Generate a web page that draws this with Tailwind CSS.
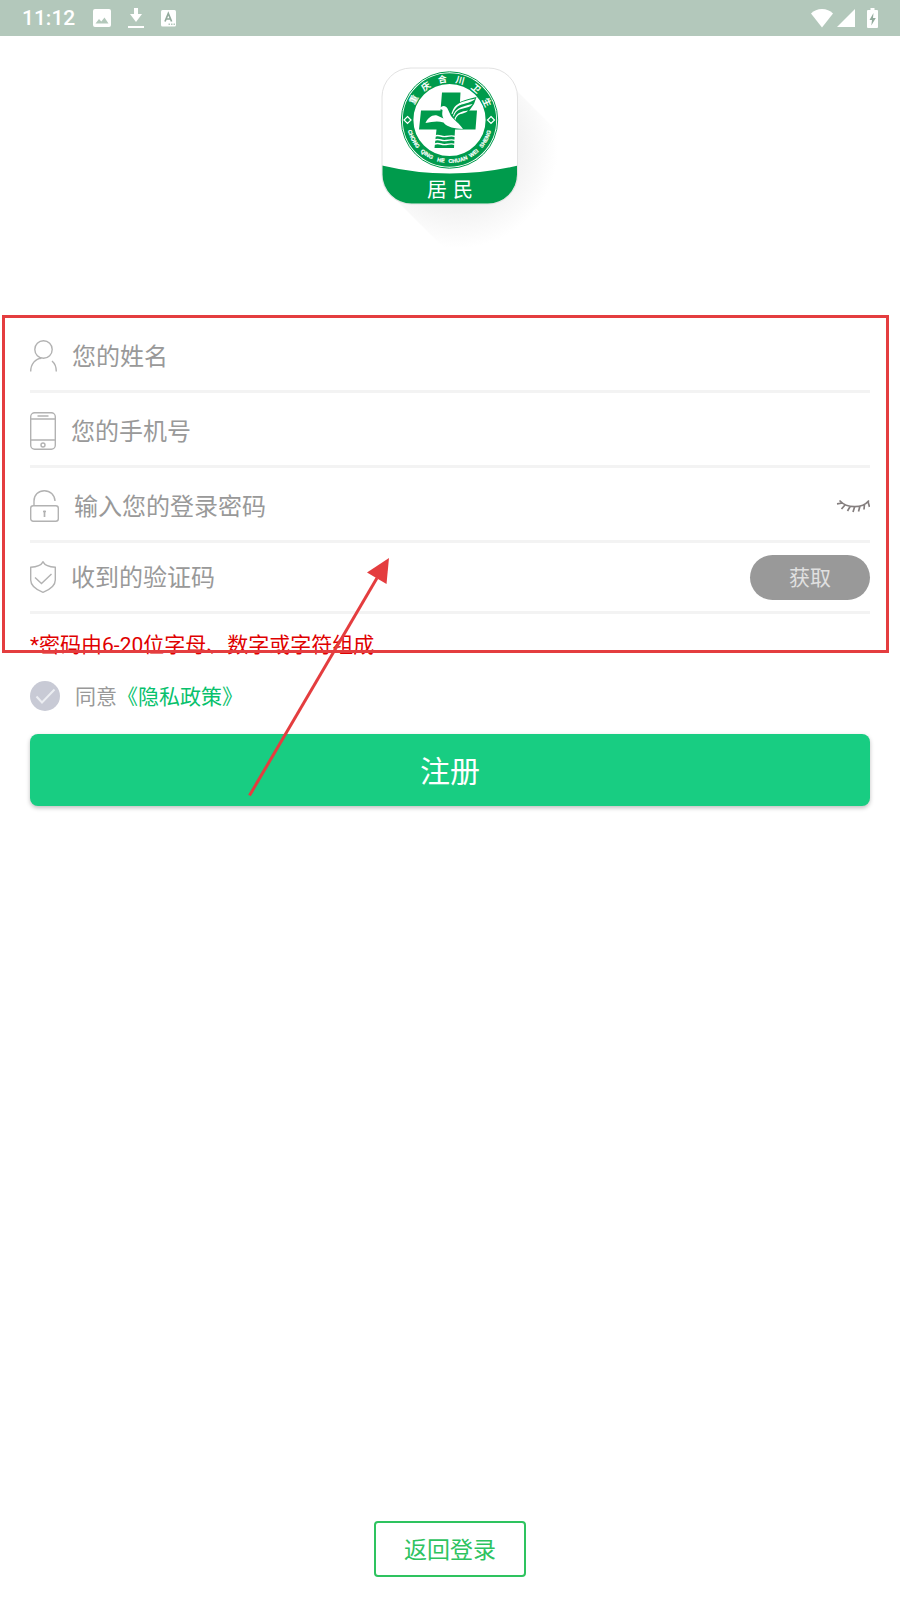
<!DOCTYPE html>
<html lang="zh-CN">
<head>
  <meta charset="UTF-8" />
  <meta name="viewport" content="width=device-width, initial-scale=1.0" />
  <title>注册</title>
  <script src="https://cdn.jsdelivr.net/npm/@tailwindcss/browser@4"></script>
</head>
<body class="relative flex min-h-screen flex-col bg-white font-[Roboto,'Noto_Sans_CJK_SC',sans-serif] text-[#999]">

<!-- status bar -->
<header class="flex h-9 items-center justify-between bg-[#b3c8bb] px-[22px] text-white">
  <div class="flex items-center">
    <span class="text-[21px] leading-none font-medium">11:12</span>
    <svg class="ml-[18px] h-[18px] w-[18px]" viewBox="0 0 18 18" fill="currentColor"><path fill-rule="evenodd" d="M2 0h14a2 2 0 0 1 2 2v14a2 2 0 0 1-2 2H2a2 2 0 0 1-2-2V2a2 2 0 0 1 2-2zM2.500 14.500h13L11.500 8.500 8.300 12.500 6 10z"/></svg>
    <svg class="ml-[17px] h-[22px] w-4" viewBox="0 0 16 22" fill="currentColor"><path d="M6 1h4v6h4l-6 8-6-8h4zM0 19h16v2H0z"/></svg>
    <svg class="ml-[17px] h-[17px] w-4" viewBox="0 0 16 17"><rect width="15" height="16.500" rx="1.500" fill="#fff"/><path d="M4 11.500L7.300 3.500 10.600 11.500M5.200 9h4.300" fill="none" stroke="#93ab9d" stroke-width="1.700"/><path d="M7.500 13.500h1.500v1.500H7.500zM10 13.500h1.500v1.500H10zM12.500 13.500H14v1.500h-1.500z" fill="#b3c8bb"/></svg>
  </div>
  <div class="flex items-center">
    <svg class="h-5 w-[22px]" viewBox="0 0 22 20" fill="currentColor"><path d="M11 19.500L0 5.500C3 2.500 6.500 1 11 1s8 1.500 11 4.500z"/></svg>
    <svg class="ml-1 h-[18px] w-[18px]" viewBox="0 0 18 18" fill="currentColor"><path d="M18 0v18H0z"/></svg>
    <svg class="ml-3 h-5 w-[11px]" viewBox="0 0 11 20"><path fill="#fff" d="M3.500 0h4v2H10a1 1 0 0 1 1 1v16a1 1 0 0 1-1 1H1a1 1 0 0 1-1-1V3a1 1 0 0 1 1-1h2.500z"/><path fill="#93ab9d" d="M6.500 5L2.500 12h2.500l-.7 5.500L8.800 10H6z"/></svg>
  </div>
</header>

<!-- app logo -->
<div class="flex justify-center pt-6 pl-10">
  <svg class="h-[200px] w-[200px]" viewBox="0 0 200 200" role="img" aria-label="重庆合川卫生 居民">
    <defs>
      <radialGradient id="fade" gradientUnits="userSpaceOnUse" cx="88" cy="88" r="100">
        <stop offset=".5" stop-color="#efefef"/>
        <stop offset="1" stop-color="#fff"/>
      </radialGradient>
      <clipPath id="tile"><rect x="12.500" y="8.500" width="134.500" height="135" rx="29"/></clipPath>
      <path id="arc" d="M36.500 60a43 43 0 0 0 86 0"/>
    </defs>
    <path d="M140 24L200 84V200H86L24 138z" fill="url(#fade)"/>
    <rect x="12" y="8" width="135.500" height="136" rx="29" fill="#fff" stroke="#e2e2e2"/>
    <path clip-path="url(#tile)" d="M12 105.500Q79.500 121.500 148 105.500V144H12z" fill="#009b4c"/>
    <g font-family="Noto Sans CJK SC, sans-serif" font-size="20" fill="#fff" text-anchor="middle">
      <text x="67" y="137">居</text>
      <text x="93" y="137">民</text>
    </g>
    <g fill="none" stroke="#009b4c">
      <circle cx="79.500" cy="60" r="48.200" stroke-width="1"/>
      <circle cx="79.500" cy="60" r="41.400" stroke-width="10.600"/>
    </g>
    <g transform="translate(79.500 60)" font-family="Noto Sans CJK SC, sans-serif" font-size="9" font-weight="700" fill="#fff" text-anchor="middle">
      <text y="-38" transform="rotate(-60)">重</text>
      <text y="-38" transform="rotate(-35)">庆</text>
      <text y="-38" transform="rotate(-10)">合</text>
      <text y="-38" transform="rotate(15)">川</text>
      <text y="-38" transform="rotate(40)">卫</text>
      <text y="-38" transform="rotate(65)">生</text>
    </g>
    <g font-family="Liberation Sans, sans-serif" font-size="5.500" font-weight="700" fill="#fff" stroke="#fff" stroke-width=".2" text-anchor="middle">
      <text><textPath href="#arc" startOffset="15.500%">CHONG</textPath></text>
      <text><textPath href="#arc" startOffset="31.500%">QING</textPath></text>
      <text><textPath href="#arc" startOffset="43.300%">HE</textPath></text>
      <text><textPath href="#arc" startOffset="56.700%">CHUAN</textPath></text>
      <text><textPath href="#arc" startOffset="70%">WEI</textPath></text>
      <text><textPath href="#arc" startOffset="84.500%">SHENG</textPath></text>
    </g>
    <path d="M37.500 56.500L41 60l-3.500 3.500L34 60zM121 56.500l3.500 3.500-3.500 3.500-3.500-3.500z" fill="none" stroke="#fff" stroke-width="1.200"/>
    <!-- cross -->
    <path d="M72 32.500h18.500L89.500 50.500H107L105.500 69.500H85L84 88H64.500L66.500 69.500H49L51 50.500h19.500z" fill="#009b4c"/>
    <!-- bird -->
    <path d="M80 55C83 44 89 41 106.500 37L104 44 99 51 88 56 84 60z" fill="#009b4c"/>
    <g fill="#fff">
      <path d="M69.500 48.500C71.500 45 76 45 77.500 48.500L81 56C85 61 89 63 93 69C85 68.500 77 67.500 73.500 62.500C67 60.500 62 62 55.500 63C58 58 62 54.500 67 55.500L73.500 58.500C71.500 55 72.500 52 72.500 50z"/>
      <path d="M81.500 54C84 45 88 42 105.500 38.500C103 41.500 98 43 91.500 44.500C86.500 46 84.500 49.500 82.500 54z"/>
      <path d="M83 56C85.500 49 89 47 102.500 44C100 47.500 94 48 89.500 49.500C86.500 51 85 53 83.800 56.500z"/>
      <path d="M84.500 58.500C87.500 52.500 91 51.500 98 50.500C96 53.500 91 53.500 88.500 55C86.500 56.500 86 58 85.500 60z"/>
    </g>
    <path d="M64 76.500c5-3 7 1 12 0s7-1 9 0M64 80.500c5-3 7 1 12 0s7-1 9 0M64 84.500c5-3 7 1 12 0s7-1 9 0" fill="none" stroke="#fff" stroke-width="1.400"/>
  </svg>
</div>

<form class="mx-[30px] mt-[58px]">
  <div class="flex h-[75px] items-center gap-[15px] border-b-3 border-[#f3f3f3] pt-1">
    <label for="name" class="shrink-0">
      <svg class="h-8 w-[27px]" viewBox="0 0 27 32" fill="none" stroke="#b2b2b2" stroke-width="1.400"><circle cx="13.500" cy="9.500" r="8.700"/><path d="M.7 31.500C.7 24 5.500 18.500 11.500 18.200M22 21c3 2.500 4.300 6 4.300 10.500"/></svg>
    </label>
    <input id="name" type="text" aria-label="您的姓名" placeholder="您的姓名" class="h-9 min-w-0 flex-1 pt-[2px] text-2xl outline-none placeholder:text-[#999]" />
  </div>
  <div class="flex h-[75px] items-center gap-[15px] border-b-3 border-[#f3f3f3] pt-1">
    <label for="phone" class="shrink-0">
      <svg class="h-[38px] w-[26px]" viewBox="0 0 26 38" fill="none" stroke="#b2b2b2" stroke-width="1.400"><rect x=".7" y=".7" width="24.600" height="36.600" rx="4"/><path d="M.7 7h24.600M.7 28h24.600M7.500 4h11"/><circle cx="13" cy="33" r="2"/></svg>
    </label>
    <input id="phone" type="tel" aria-label="您的手机号" placeholder="您的手机号" class="h-9 min-w-0 flex-1 pt-[2px] text-2xl outline-none placeholder:text-[#999]" />
  </div>
  <div class="flex h-[75px] items-center gap-[15px] border-b-3 border-[#f3f3f3] pt-1">
    <label for="password" class="shrink-0">
      <svg class="h-8 w-[29px]" viewBox="0 0 29 32" fill="none" stroke="#b2b2b2" stroke-width="1.400"><rect x=".7" y="15.700" width="27.600" height="15.600" rx="2.500"/><path d="M4 15.500V11C4 5 8.500.7 14.300.7S24.700 5 25 11"/><path d="M13 21.500h3M14.500 20.500v6.500" stroke-width="1.700"/></svg>
    </label>
    <input id="password" type="password" aria-label="输入您的登录密码" placeholder="输入您的登录密码" class="h-9 min-w-0 flex-1 pt-[2px] text-2xl outline-none placeholder:text-[#999]" />
    <button type="button" aria-label="显示密码">
      <svg class="h-[14px] w-[34px]" viewBox="0 0 34 14" fill="none" stroke="#857f7f" stroke-width="1.700"><path d="M3.500 1.500C11 9.500 26 10 33 1.500M1 4.800l5.500-.8M9 6l-3.500 4M14 7.700L11.500 12M18.500 8.200L17 13M24 7l-1.500 5.500M28.500 5L28 10.500M32 2.500L33.500 8"/></svg>
    </button>
  </div>
  <div class="flex h-[71px] items-center gap-[15px] border-b-3 border-[#f3f3f3]">
    <label for="code" class="shrink-0">
      <svg class="h-8 w-[26px]" viewBox="0 0 26 32" fill="none" stroke="#b2b2b2" stroke-width="1.400"><path d="M13 .8C11 4.500 6 6 .7 6.300V19C.7 25 7 29 13 31.300 19 29 25.300 25 25.300 19V6.300C20 6 15 4.500 13 .8z"/><path d="M5 16.500l6.500 6L21.500 13"/></svg>
    </label>
    <input id="code" type="text" aria-label="收到的验证码" placeholder="收到的验证码" class="h-9 min-w-0 flex-1 pt-[2px] text-2xl outline-none placeholder:text-[#999]" />
    <button type="button" class="h-[45px] w-[120px] rounded-full bg-[#999] pt-1 text-[21px] text-[#e0e0e0]">获取</button>
  </div>

  <p class="mt-4 text-[21px] leading-[30px] text-[#e00000]">*密码由6-20位字母、数字或字符组成</p>

  <div class="mt-[21px] flex items-start text-[21px]">
    <span class="mr-[15px] grid h-[30px] w-[30px] shrink-0">
      <input id="agree" type="checkbox" class="col-start-1 row-start-1 h-[30px] w-[30px] appearance-none rounded-full bg-[#c8cad5] checked:bg-[#18cd82]" />
      <svg class="pointer-events-none col-start-1 row-start-1 h-[30px] w-[30px]" viewBox="0 0 30 30" fill="none" stroke="#eceef2" stroke-width="2"><path d="M6.500 15.500l5.500 6L24.500 8.500"/></svg>
    </span>
    <label for="agree" class="leading-8">同意</label>
    <a href="#" class="leading-8 text-[#07c16c]">《隐私政策》</a>
  </div>

  <button type="submit" class="mt-[21px] h-[72px] w-full rounded-lg bg-[#18cd82] pt-1 text-3xl text-white shadow-[0_2px_4px_rgba(0,0,0,0.25)]">注册</button>
</form>

<a href="#" class="mx-auto mt-auto mb-[23px] flex h-14 w-[152px] items-center justify-center rounded border-2 border-[#2ec35f] pt-1 text-[23px] text-[#2ec35f]">返回登录</a>

<!-- annotation marks over the form -->
<div class="pointer-events-none absolute top-[315px] right-[11px] left-[2px] h-[338px] border-3 border-[#e43d3f]"></div>
<svg class="pointer-events-none absolute top-[556px] left-[246px] h-[242px] w-[146px]" viewBox="0 0 146 242"><path d="M3.500 239.500L131 22" stroke="#e43d3f" stroke-width="3"/><path d="M143 2l-22 14.500L140.500 28z" fill="#e43d3f"/></svg>

</body>
</html>
